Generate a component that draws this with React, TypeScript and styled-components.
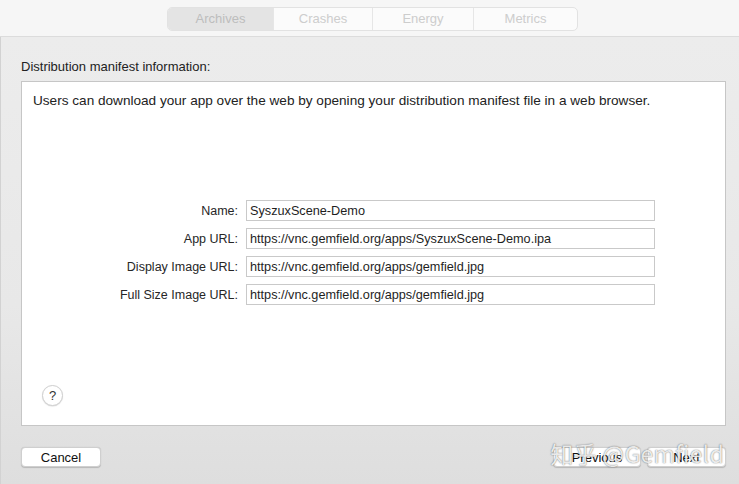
import { FC } from "react";
import styled, { createGlobalStyle } from "styled-components";

const GlobalStyle = createGlobalStyle`
  html, body {
    margin: 0;
    padding: 0;
    width: 739px;
    height: 484px;
    overflow: hidden;
  }
  body {
    font-family: "Liberation Sans", Arial, sans-serif;
    font-size: 13px;
    color: #1e1e1e;
  }
`;

const tabs = [
  { name: "Archives", width: 105 },
  { name: "Crashes", width: 99 },
  { name: "Energy", width: 101 },
  { name: "Metrics", width: 104 },
];

const fields = [
  { label: "Name:", value: "SyszuxScene-Demo" },
  { label: "App URL:", value: "https://vnc.gemfield.org/apps/SyszuxScene-Demo.ipa" },
  { label: "Display Image URL:", value: "https://vnc.gemfield.org/apps/gemfield.jpg" },
  { label: "Full Size Image URL:", value: "https://vnc.gemfield.org/apps/gemfield.jpg" },
];

const App: FC = () => {
  return (
    <Window>
      <GlobalStyle />
      <Toolbar>
        <Segmented>
          {tabs.map((t, i) => (
            <Segment key={t.name} $active={i === 0} $width={t.width}>
              {t.name}
            </Segment>
          ))}
        </Segmented>
      </Toolbar>
      <Sheet>
        <SectionTitle>Distribution manifest information:</SectionTitle>
        <Panel>
          <Intro>
            Users can download your app over the web by opening your distribution manifest file in a web browser.
          </Intro>
          <Form>
            {fields.map((f) => (
              <FieldRow key={f.label}>
                <Label>{f.label}</Label>
                <Field defaultValue={f.value} />
              </FieldRow>
            ))}
          </Form>
          <HelpButton>?</HelpButton>
        </Panel>
        <Footer>
          <Button $width={80}>Cancel</Button>
          <RightButtons>
            <Button $width={88}>Previous</Button>
            <Button $width={79}>Next</Button>
          </RightButtons>
          <Watermark>知乎 @Gemfield</Watermark>
        </Footer>
      </Sheet>
    </Window>
  );
};

const Window = styled.div`
  width: 739px;
  height: 484px;
  display: flex;
  flex-direction: column;
  background: #f6f6f6;
`;

const Toolbar = styled.div`
  height: 37px;
  flex-shrink: 0;
  display: flex;
  justify-content: center;
  align-items: center;
  background: #f6f6f6;
  border-bottom: 1px solid #dcdcdc;
  box-sizing: border-box;
  padding-left: 6px;
  padding-top: 1px;
`;

const Segmented = styled.div`
  display: flex;
  height: 24px;
  border: 1px solid #e2e2e2;
  border-radius: 5px;
  overflow: hidden;
  background: #fbfbfb;
  box-sizing: border-box;
`;

const Segment = styled.div<{ $active: boolean; $width: number }>`
  width: ${(p) => p.$width}px;
  box-sizing: border-box;
  display: flex;
  align-items: center;
  justify-content: center;
  font-size: 13px;
  color: ${(p) => (p.$active ? "#bdbdbd" : "#cdcdcd")};
  background: ${(p) => (p.$active ? "#e4e4e4" : "transparent")};
  border-left: 1px solid #e6e6e6;
  &:first-child {
    border-left: none;
  }
`;

const Sheet = styled.div`
  flex: 1;
  display: flex;
  flex-direction: column;
  padding: 22px 13px 0 21px;
  background: linear-gradient(#ececec, #e8e8e8 60%, #dedede);
  border-left: 1px solid #d2d2d2;
`;

const SectionTitle = styled.div`
  font-size: 13px;
  line-height: 16px;
  color: #222;
  margin-left: -1px;
`;

const Panel = styled.div`
  position: relative;
  margin-top: 6px;
  margin-left: -1px;
  height: 345px;
  box-sizing: border-box;
  background: #fff;
  border: 1px solid #c6c6c6;
  padding: 11px 11px 0 11px;
`;

const Intro = styled.div`
  font-size: 13.6px;
  line-height: 16px;
  color: #222;
  white-space: nowrap;
`;

const Form = styled.div`
  display: flex;
  flex-direction: column;
  gap: 7px;
  margin-top: 91px;
`;

const FieldRow = styled.div`
  display: flex;
  align-items: center;
  gap: 8px;
`;

const Label = styled.div`
  width: 205px;
  text-align: right;
  font-size: 12.5px;
  color: #262626;
`;

const Field = styled.input`
  width: 409px;
  height: 21px;
  box-sizing: border-box;
  border: 1px solid #c9c9c9;
  outline: none;
  padding: 0 3px;
  font-family: "Liberation Sans", Arial, sans-serif;
  font-size: 12.7px;
  color: #1e1e1e;
  background: #fff;
`;

const HelpButton = styled.div`
  position: absolute;
  left: 20px;
  bottom: 19px;
  width: 19px;
  height: 19px;
  border-radius: 50%;
  border: 1px solid #d0d0d0;
  box-shadow: 0 0.5px 1px rgba(0, 0, 0, 0.15);
  display: flex;
  align-items: center;
  justify-content: center;
  font-size: 13px;
  color: #333;
  background: #fff;
`;

const Footer = styled.div`
  position: relative;
  display: flex;
  justify-content: space-between;
  align-items: center;
  margin-top: 21px;
  margin-left: -1px;
`;

const RightButtons = styled.div`
  display: flex;
  gap: 6px;
`;

const Button = styled.div<{ $width: number }>`
  width: ${(p) => p.$width}px;
  height: 20px;
  box-sizing: border-box;
  display: flex;
  align-items: center;
  justify-content: center;
  background: #fff;
  border-radius: 4px;
  border: 1px solid #cfcfcf;
  box-shadow: 0 0.5px 1px rgba(0, 0, 0, 0.18);
  font-size: 13px;
  color: #111;
`;

const Watermark = styled.div`
  position: absolute;
  right: 2px;
  top: -11px;
  font-family: "Noto Sans CJK SC", "Liberation Sans", sans-serif;
  font-size: 23px;
  letter-spacing: 0.3px;
  color: rgba(255, 255, 255, 0.85);
  text-shadow: 0 0 1px rgba(0, 0, 0, 0.45), 0 0 2px rgba(0, 0, 0, 0.25);
  pointer-events: none;
  white-space: nowrap;
`;

export default App;
